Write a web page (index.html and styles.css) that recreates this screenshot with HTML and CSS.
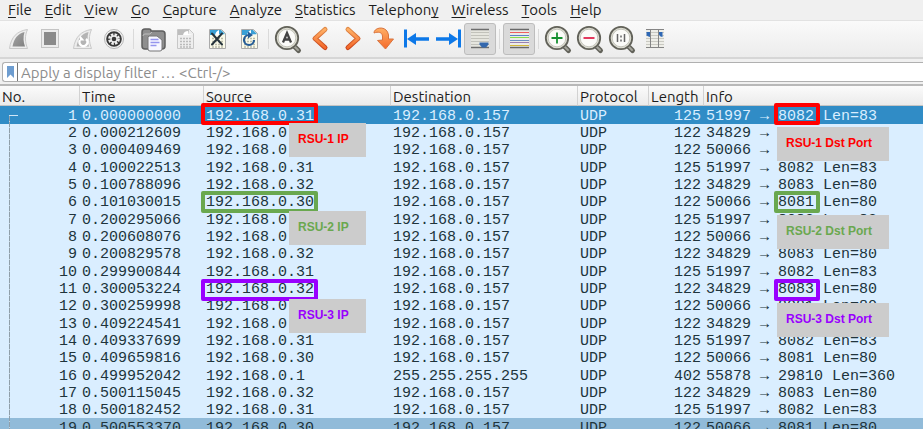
FILE: index.html
```html
<!DOCTYPE html>
<html lang="en">
<head>
<meta charset="utf-8">
<title>Packet capture</title>
<link rel="stylesheet" href="styles.css">
</head>
<body>
<svg class="defs" width="0" height="0" aria-hidden="true">
  <defs>
    <linearGradient id="orange" x1="0" y1="0" x2="0" y2="1"><stop offset="0" stop-color="#ffb066"/><stop offset="1" stop-color="#f4692a"/></linearGradient>
    <linearGradient id="orange-edge" x1="0" y1="0" x2="0" y2="1"><stop offset="0" stop-color="#e08a48"/><stop offset="1" stop-color="#c8431a"/></linearGradient>
    <linearGradient id="grey" x1="0" y1="0" x2="1" y2="1"><stop offset="0" stop-color="#a8a8a8"/><stop offset="1" stop-color="#808080"/></linearGradient>
    <g id="lens">
      <path d="M22.500 23.500l4 4" stroke="#62625a" stroke-width="5" stroke-linecap="round"/>
      <path d="M23 24l3 3" stroke="#a5a59c" stroke-width="2" stroke-linecap="round"/>
      <circle cx="15" cy="15" r="10.500" fill="#fbfbf8" stroke="#deded2" stroke-width="3"/>
      <circle cx="15" cy="15" r="11.200" fill="none" stroke="#62625a" stroke-width="1.800"/>
      <circle cx="15" cy="15" r="8.800" fill="none" stroke="#b9b9ae" stroke-width=".8"/>
    </g>
    <g id="grid" fill="none" stroke-width="1.500" stroke-dasharray="2 1"><path d="M11 15.500h11M11 18.500h11M11 21.500h11M11 24h11"/></g>
  </defs>
</svg>
<nav class="menu" aria-label="Main menu">
  <a href="#"><u>F</u>ile</a><a href="#"><u>E</u>dit</a><a href="#"><u>V</u>iew</a><a href="#"><u>G</u>o</a><a href="#"><u>C</u>apture</a><a href="#"><u>A</u>nalyze</a><a href="#"><u>S</u>tatistics</a><a href="#">Telephon<u>y</u></a><a href="#"><u>W</u>ireless</a><a href="#"><u>T</u>ools</a><a href="#"><u>H</u>elp</a>
</nav>
<div class="toolbar" role="toolbar" aria-label="Main toolbar">
  <button aria-label="Start capture"><svg viewBox="0 0 32 32"><path d="M7.500 25.500C9 14 15 8 25.500 6.500C22.500 13 23 19 25.500 25.500Z" fill="#ededed" stroke="#c9c9c9"/><path d="M10.500 23.500C12 15.500 16 10.500 22.500 9C21 14 21.300 19 23 23.500Z" fill="url(#grey)"/></svg></button>
  <button aria-label="Stop capture"><svg viewBox="0 0 32 32"><rect x="7.500" y="6.500" width="17" height="18" fill="#ececec" stroke="#c4c4c4"/><rect x="10" y="9" width="12" height="13" fill="#8a8a8a"/></svg></button>
  <button aria-label="Restart capture"><svg viewBox="0 0 32 32"><path d="M7.500 25.500C9 14 15 8 25.500 6.500C22.500 13 23 19 25.500 25.500Z" fill="#ededed" stroke="#c9c9c9"/><path d="M10.500 23.500C12 15.500 16 10.500 22.500 9C21 14 21.300 19 23 23.500Z" fill="#b4b4b4"/><path d="M14 17a4 4 0 1 0 6-1" fill="none" stroke="#fff" stroke-width="2.400"/><path d="M14 12.500v5h4.500z" fill="#fff"/></svg></button>
  <button aria-label="Capture options"><svg viewBox="0 0 32 32"><circle cx="16" cy="16" r="9.500" fill="#f4f4f4" stroke="#b5b5b5"/><circle cx="16" cy="16" r="7.800" fill="#383838"/><circle cx="16" cy="16" r="4.600" fill="none" stroke="#eee" stroke-width="2.600" stroke-dasharray="2.400 1.213"/><circle cx="16" cy="16" r="3.700" fill="#eee"/><circle cx="16" cy="16" r="2.300" fill="#383838"/></svg></button>
  <span class="sep"></span>
  <button aria-label="Open"><svg viewBox="0 0 32 32"><path d="M5 9Q5 6 8 6h4q2 0 2 2h11q3 0 3 3v12q0 3-3 3H8q-3 0-3-3z" fill="#8f8f8f" stroke="#5f5f5f" stroke-width="1.500"/><path d="M6 13q0-2 2-2h5l2-2" fill="none" stroke="#bdbdbd"/><path d="M12 13h8l5 4v9q0 2-2 2H13q-2 0-2-2V14z" fill="#f7f7ff" stroke="#777"/><path d="M13.500 16.500h8M13.500 19.500h9M13.500 22.500h6" stroke="#9494ee" stroke-width="1.600"/></svg></button>
  <button aria-label="Save"><svg viewBox="0 0 32 32"><path d="M8.500 6.500h12l4 4v15h-16z" fill="#eee" stroke="#c7c7c7"/><path d="M9 7h11l-1 5H9z" fill="#bdbdbd"/><path d="M14 12q1-4 5-4v3l5 1z" fill="#fff"/><use href="#grid" stroke="#bbb"/></svg></button>
  <button aria-label="Close"><svg viewBox="0 0 32 32"><path d="M8.500 6.500h12l4 4v15h-16z" fill="#fafae9" stroke="#aaa"/><path d="M9 7h11l4 4-4 1H9z" fill="#39a0d6"/><path d="M14 12q1-4 4-5v4l6 1z" fill="#fff"/><use href="#grid" stroke="#bbbba8"/><path d="M11 10.500l10 11M21 10.500l-10 11" stroke="#26343c" stroke-width="2" stroke-linecap="round"/></svg></button>
  <button aria-label="Reload"><svg viewBox="0 0 32 32"><path d="M8.500 6.500h12l4 4v15h-16z" fill="#fafae9" stroke="#aaa"/><path d="M9 7h11l4 4-4 1H9z" fill="#39a0d6"/><path d="M14 12q1-4 4-5v4l6 1z" fill="#fff"/><use href="#grid" stroke="#bbbba8"/><path d="M21 17a5 5 0 1 1-5-5" fill="none" stroke="#255c96" stroke-width="2.200"/><path d="M15 8.500v7l5-3.500z" fill="#255c96"/></svg></button>
  <span class="sep"></span>
  <button aria-label="Find"><svg viewBox="0 0 32 32"><use href="#lens"/><path d="M11 19.500l4-9.500l4 9.500M12.500 16.500h5" fill="none" stroke="#444" stroke-width="2.300"/></svg></button>
  <button aria-label="Previous packet"><svg viewBox="0 0 32 32"><path d="M21 6.500L11 15.500L21 24.500" fill="none" stroke="url(#orange-edge)" stroke-width="5" stroke-linecap="round" stroke-linejoin="round"/><path d="M21 6.500L11 15.500L21 24.500" fill="none" stroke="url(#orange)" stroke-width="3" stroke-linecap="round" stroke-linejoin="round"/></svg></button>
  <button aria-label="Next packet"><svg viewBox="0 0 32 32"><path d="M12 6.500L22 15.500L12 24.500" fill="none" stroke="url(#orange-edge)" stroke-width="5" stroke-linecap="round" stroke-linejoin="round"/><path d="M12 6.500L22 15.500L12 24.500" fill="none" stroke="url(#orange)" stroke-width="3" stroke-linecap="round" stroke-linejoin="round"/></svg></button>
  <button aria-label="Go to packet"><svg viewBox="0 0 32 32"><path d="M6 10C6 4 19 2 20.500 12V16H25.500L17.500 26L9.500 17.500L14.500 17V13C14 9 10 8.500 6 10Z" fill="url(#orange)" stroke="#d9743f" stroke-linejoin="round"/></svg></button>
  <button aria-label="First packet"><svg viewBox="0 0 32 32"><path d="M5.500 6.500v18" stroke="#0d78e8" stroke-width="3"/><path d="M12 16h17" stroke="#0d78e8" stroke-width="3.500"/><path d="M7 16l9-6v12z" fill="#0d78e8"/></svg></button>
  <button aria-label="Last packet"><svg viewBox="0 0 32 32"><path d="M27.500 6.500v18" stroke="#0d78e8" stroke-width="3"/><path d="M4 16h17" stroke="#0d78e8" stroke-width="3.500"/><path d="M26 16l-9-6v12z" fill="#0d78e8"/></svg></button>
  <button class="on" aria-label="Auto scroll" aria-pressed="true"><svg viewBox="0 0 32 32"><path d="M7 6.500h18v19H7z" fill="#e6e6df"/><path d="M7 9.500h18M7 12.500h18M7 15.500h18M7 18.500h18M7 21.500h18" stroke="#c2c2bb"/><path d="M7 6.500h18M7 24.500h18" stroke="#6d6d6d" stroke-width="1.300"/><path d="M15.500 19.500h9v2l-2.500 3h-4l-2.500-3z" fill="#3468ad"/></svg></button>
  <span class="sep"></span>
  <button class="on" aria-label="Colorize packets" aria-pressed="true"><svg viewBox="0 0 32 32"><path d="M7 6h19v19H7z" fill="#ecece7"/><path d="M7 6.500h19M7 24.500h19" stroke="#686868" stroke-width="1.300"/><path d="M7 9.500h19" stroke="#ef6060"/><path d="M7 12.500h19" stroke="#5b83c7"/><path d="M7 14.500h19" stroke="#86dd4e"/><path d="M7 17.500h19" stroke="#6d8fc4"/><path d="M7 19.500h19" stroke="#9b7fb0"/><path d="M7 22.500h19" stroke="#d2b83c"/></svg></button>
  <span class="sep"></span>
  <button aria-label="Zoom in"><svg viewBox="0 0 32 32"><use href="#lens"/><path d="M9.500 15h11M15 9.500v11" stroke="#169030" stroke-width="1.800"/></svg></button>
  <button aria-label="Zoom out"><svg viewBox="0 0 32 32"><use href="#lens"/><path d="M9.500 15h11" stroke="#e0244c" stroke-width="1.800"/></svg></button>
  <button aria-label="Normal size"><svg viewBox="0 0 32 32"><use href="#lens"/><path d="M11.500 11v8M18.500 11v8" stroke="#666" stroke-width="1.500"/><path d="M15 12.500v2M15 16.500v2" stroke="#666" stroke-width="1.500"/></svg></button>
  <button aria-label="Resize columns"><svg viewBox="0 0 32 32"><path d="M8 6.500h18v19H8z" fill="#eeeee8"/><path d="M8 9.500h18M8 12.500h18M8 15.500h18M8 18.500h18M8 21.500h18" stroke="#c9c9c2"/><path d="M8 6.500h18M8 24.500h18M12.500 6v19M20.500 6v19" stroke="#858585"/><path d="M8.500 9h3.500v5l-1.500-.5-2-1zM21 9h3.500v5l-2-.5-1.500-2z" fill="#2f68b5"/></svg></button>
</div>
<form class="filter">
  <button type="button" aria-label="Filter bookmarks"><svg viewBox="0 0 14 18"><path d="M4 3h7v12l-3.500-3.500L4 15z" fill="#6e9dd0"/></svg></button>
  <input type="text" aria-label="Display filter" placeholder="Apply a display filter … &lt;Ctrl-/&gt;">
</form>
<main class="packets">
  <table>
    <colgroup><col class="c-no"><col class="c-time"><col class="c-addr"><col class="c-addr"><col class="c-proto"><col class="c-len"><col></colgroup>
    <thead><tr><th>No.</th><th>Time</th><th>Source</th><th>Destination</th><th>Protocol</th><th>Length</th><th>Info</th></tr></thead>
    <tbody>
      <tr class="selected"><td>1</td><td>0.000000000</td><td>192.168.0.31</td><td>192.168.0.157</td><td>UDP</td><td>125</td><td>51997 → 8082 Len=83</td></tr>
      <tr><td>2</td><td>0.000212609</td><td>192.168.0.32</td><td>192.168.0.157</td><td>UDP</td><td>122</td><td>34829 → 8083 Len=80</td></tr>
      <tr><td>3</td><td>0.000409469</td><td>192.168.0.30</td><td>192.168.0.157</td><td>UDP</td><td>122</td><td>50066 → 8081 Len=80</td></tr>
      <tr><td>4</td><td>0.100022513</td><td>192.168.0.31</td><td>192.168.0.157</td><td>UDP</td><td>125</td><td>51997 → 8082 Len=83</td></tr>
      <tr><td>5</td><td>0.100788096</td><td>192.168.0.32</td><td>192.168.0.157</td><td>UDP</td><td>122</td><td>34829 → 8083 Len=80</td></tr>
      <tr><td>6</td><td>0.101030015</td><td>192.168.0.30</td><td>192.168.0.157</td><td>UDP</td><td>122</td><td>50066 → 8081 Len=80</td></tr>
      <tr><td>7</td><td>0.200295066</td><td>192.168.0.31</td><td>192.168.0.157</td><td>UDP</td><td>125</td><td>51997 → 8082 Len=83</td></tr>
      <tr><td>8</td><td>0.200608076</td><td>192.168.0.30</td><td>192.168.0.157</td><td>UDP</td><td>122</td><td>50066 → 8081 Len=80</td></tr>
      <tr><td>9</td><td>0.200829578</td><td>192.168.0.32</td><td>192.168.0.157</td><td>UDP</td><td>122</td><td>34829 → 8083 Len=80</td></tr>
      <tr><td>10</td><td>0.299900844</td><td>192.168.0.31</td><td>192.168.0.157</td><td>UDP</td><td>125</td><td>51997 → 8082 Len=83</td></tr>
      <tr><td>11</td><td>0.300053224</td><td>192.168.0.32</td><td>192.168.0.157</td><td>UDP</td><td>122</td><td>34829 → 8083 Len=80</td></tr>
      <tr><td>12</td><td>0.300259998</td><td>192.168.0.30</td><td>192.168.0.157</td><td>UDP</td><td>122</td><td>50066 → 8081 Len=80</td></tr>
      <tr><td>13</td><td>0.409224541</td><td>192.168.0.32</td><td>192.168.0.157</td><td>UDP</td><td>122</td><td>34829 → 8083 Len=80</td></tr>
      <tr><td>14</td><td>0.409337699</td><td>192.168.0.31</td><td>192.168.0.157</td><td>UDP</td><td>125</td><td>51997 → 8082 Len=83</td></tr>
      <tr><td>15</td><td>0.409659816</td><td>192.168.0.30</td><td>192.168.0.157</td><td>UDP</td><td>122</td><td>50066 → 8081 Len=80</td></tr>
      <tr><td>16</td><td>0.499952042</td><td>192.168.0.1</td><td>255.255.255.255</td><td>UDP</td><td>402</td><td>55878 → 29810 Len=360</td></tr>
      <tr><td>17</td><td>0.500115045</td><td>192.168.0.32</td><td>192.168.0.157</td><td>UDP</td><td>122</td><td>34829 → 8083 Len=80</td></tr>
      <tr><td>18</td><td>0.500182452</td><td>192.168.0.31</td><td>192.168.0.157</td><td>UDP</td><td>125</td><td>51997 → 8082 Len=83</td></tr>
      <tr class="hover"><td>19</td><td>0.500553370</td><td>192.168.0.30</td><td>192.168.0.157</td><td>UDP</td><td>122</td><td>50066 → 8081 Len=80</td></tr>
    </tbody>
  </table>
  <div class="trace"></div>
  <div class="note rsu1"><span class="box ip"></span><span class="tag ip">RSU-1 IP</span><span class="box port"></span><span class="tag port">RSU-1 Dst Port</span></div>
  <div class="note rsu2"><span class="box ip"></span><span class="tag ip">RSU-2 IP</span><span class="box port"></span><span class="tag port">RSU-2 Dst Port</span></div>
  <div class="note rsu3"><span class="box ip"></span><span class="tag ip">RSU-3 IP</span><span class="box port"></span><span class="tag port">RSU-3 Dst Port</span></div>
</main>
</body>
</html>
```
FILE: styles.css
```css
* { box-sizing: border-box; }

body {
  margin: 0;
  height: 100vh;
  display: flex;
  flex-direction: column;
  overflow: hidden;
  background: #f0f0f0;
  color: #1c1c1c;
  font-family: Ubuntu, "Noto Sans", sans-serif;
  font-size: 15px;
}

.defs { position: absolute; }

button {
  padding: 0;
  border: 0;
  background: none;
}

.menu {
  display: flex;
  gap: 13px;
  height: 21px;
  padding: 0 8px;
  border-bottom: 1px solid #e2e2e2;
  line-height: 20px;
}

.menu a {
  color: inherit;
  text-decoration: none;
}

.menu u {
  text-underline-offset: 2px;
  text-decoration-skip-ink: none;
}

.toolbar {
  display: flex;
  align-items: center;
  height: 38px;
  padding: 0 2px;
  background: linear-gradient(#fafafa, #ececec);
  border-bottom: 2px solid #d6d6d6;
}

.toolbar button {
  width: 32px;
  height: 32px;
  border-radius: 3px;
}

.toolbar .on {
  background: #dadada;
  border: 1px solid #bdbdbd;
}

.toolbar svg {
  display: block;
  width: 32px;
  height: 32px;
}

.toolbar .on svg { margin: -1px; }

.sep {
  width: 1px;
  height: 20px;
  margin: 0 3px;
  background: #dadada;
}

.filter {
  display: flex;
  height: 20px;
  margin: 3px 0 2px 2px;
  background: #fff;
  border: 1px solid #b0b0b0;
  border-right: 0;
  border-radius: 3px 0 0 3px;
}

.filter button {
  width: 15px;
  border-right: 1px solid #777;
}

.filter svg {
  display: block;
  width: 14px;
  height: 18px;
}

.filter input {
  flex: 1;
  min-width: 0;
  padding: 0 3px;
  border: 0;
  outline: 0;
  background: none;
  font: inherit;
}

.filter input::placeholder { color: #8c8c8c; }

.packets {
  position: relative;
  flex: 1;
  overflow: hidden;
  border-top: 2px solid #b8b8b8;
  background: #daeeff;
}

table {
  width: 100%;
  table-layout: fixed;
  border-collapse: separate;
  border-spacing: 0;
}

.c-no { width: 79px; }
.c-time { width: 124px; }
.c-addr { width: 187px; }
.c-proto { width: 71px; }
.c-len { width: 55px; }

th {
  height: 20px;
  padding: 2px 2px 0;
  border-left: 1px solid #d2d2d2;
  border-bottom: 1px solid #c4c4c4;
  background: linear-gradient(#fbfbfb, #ebebeb);
  font-weight: 400;
  line-height: 17px;
  text-align: left;
}

th:first-child { border-left: 0; }

td {
  height: 17px;
  padding: 2px 3px 0;
  color: #20343c;
  font: 15px/15px "Liberation Mono", monospace;
  white-space: nowrap;
}

tr:nth-child(3n + 1) td { height: 18px; }

td:nth-child(1),
td:nth-child(6) {
  padding-right: 2px;
  text-align: right;
}

.selected td {
  background: #308cc6;
  color: #daeeff;
}

.hover td { background: #91bbd9; }

/* Conversation marker down the left of the packet rows */
.trace {
  position: absolute;
  top: 29px;
  bottom: 0;
  left: 9px;
  width: 9px;
  border-top: 1px solid #cfe6f7;
  background: repeating-linear-gradient(#8f9faa 0 5px, #c2d3e0 5px 6px) left / 1px 100% no-repeat;
}

.note {
  position: absolute;
  left: 0;
  font: bold 12px/33px "Liberation Sans", Arial, sans-serif;
}

.rsu1 { top: 17px; color: #f00; }
.rsu2 { top: 105px; color: #6aa84f; }
.rsu3 { top: 193px; color: #90f; }

.box,
.tag { position: absolute; }

.box {
  top: 0;
  height: 22px;
  border: 4px solid;
  border-radius: 2px;
}

.box.ip { left: 201px; width: 117px; }
.box.port { left: 774px; width: 46px; }

.tag {
  height: 34px;
  padding: 0 9px;
  background: #ccc;
  white-space: nowrap;
}

.tag.ip { top: 20px; left: 289px; width: 77px; }
.tag.port { top: 24px; left: 777px; width: 112px; }
```
